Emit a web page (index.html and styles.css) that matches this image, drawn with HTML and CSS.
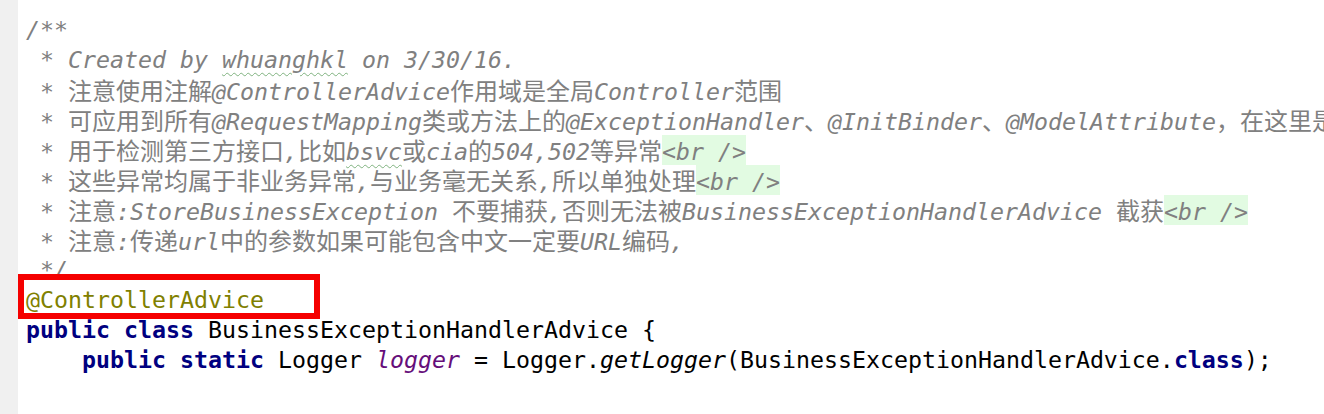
FILE: index.html
```html
<!DOCTYPE html>
<html>
<head>
<meta charset="utf-8">
<link rel="stylesheet" href="styles.css">
</head>
<body>
<div class="editor">
  <div class="gutter"></div>
  <div class="code">
    <div class="line cm">/**</div>
    <div class="line cm"> * Created by <span class="typo">whuanghkl</span> on 3/30/16.</div>
    <div class="line cm"> * <span class="cj">注意使用注解</span>@ControllerAdvice<span class="cj">作用域是全局</span>Controller<span class="cj">范围</span></div>
    <div class="line cm"> * <span class="cj">可应用到所有</span>@RequestMapping<span class="cj">类或方法上的</span>@ExceptionHandler<span class="cj">、</span>@InitBinder<span class="cj">、</span>@ModelAttribute<span class="cj">，在这里是</span></div>
    <div class="line cm"> * <span class="cj">用于检测第三方接口</span>,<span class="cj">比如</span><span class="typo">bsvc</span><span class="cj">或</span>cia<span class="cj">的</span>504,502<span class="cj">等异常</span><span class="tag">&lt;br /&gt;</span></div>
    <div class="line cm"> * <span class="cj">这些异常均属于非业务异常</span>,<span class="cj">与业务毫无关系</span>,<span class="cj">所以单独处理</span><span class="tag">&lt;br /&gt;</span></div>
    <div class="line cm"> * <span class="cj">注意</span>:StoreBusinessException <span class="cj">不要捕获</span>,<span class="cj">否则无法被</span>BusinessExceptionHandlerAdvice <span class="cj">截获</span><span class="tag">&lt;br /&gt;</span></div>
    <div class="line cm"> * <span class="cj">注意</span>:<span class="cj">传递</span>url<span class="cj">中的参数如果可能包含中文一定要</span>URL<span class="cj">编码</span>,</div>
    <div class="line cm"> */</div>
    <div class="line ann"><span class="mark"></span>@ControllerAdvice</div>
    <div class="line"><span class="kw">public class</span> BusinessExceptionHandlerAdvice {</div>
    <div class="line">    <span class="kw">public static</span> Logger <span class="field">logger</span> = Logger.<span class="it">getLogger</span>(BusinessExceptionHandlerAdvice.<span class="kw">class</span>);</div>
  </div>
</div>
</body>
</html>
```

FILE: styles.css
```css
html, body {
  margin: 0;
  padding: 0;
  background: #ffffff;
}

.editor {
  display: flex;
  width: 1324px;
  height: 414px;
  overflow: hidden;
}

.gutter {
  flex: 0 0 18px;
  background: #f0f0f0;
}

.code {
  flex: 1;
  padding: 15px 0 0 8px;
  font-family: "DejaVu Sans Mono", "Noto Sans CJK SC", monospace;
  font-size: 23.25px;
  color: #000000;
  font-synthesis: none;
  overflow: hidden;
}

.line {
  position: relative;
  height: 30px;
  line-height: 30px;
  white-space: pre;
}

.cm {
  color: #808080;
  font-style: italic;
}

.cj {
  font-family: "Noto Sans CJK SC", sans-serif;
  font-size: 24px;
  font-style: normal;
}

.typo {
  text-decoration: underline wavy #7fb27f;
  text-decoration-thickness: 1px;
  text-underline-offset: 4px;
}

.tag {
  background: #e2fbe2;
  padding: 3px 0 0;
}

.ann {
  color: #808000;
}

.kw {
  color: #000080;
  font-weight: bold;
}

.field {
  color: #660e7a;
  font-style: italic;
}

.it {
  font-style: italic;
}

.mark {
  position: absolute;
  left: -8px;
  top: -11px;
  width: 302px;
  height: 45px;
  border: 6px solid #f50000;
  box-sizing: border-box;
}
```
